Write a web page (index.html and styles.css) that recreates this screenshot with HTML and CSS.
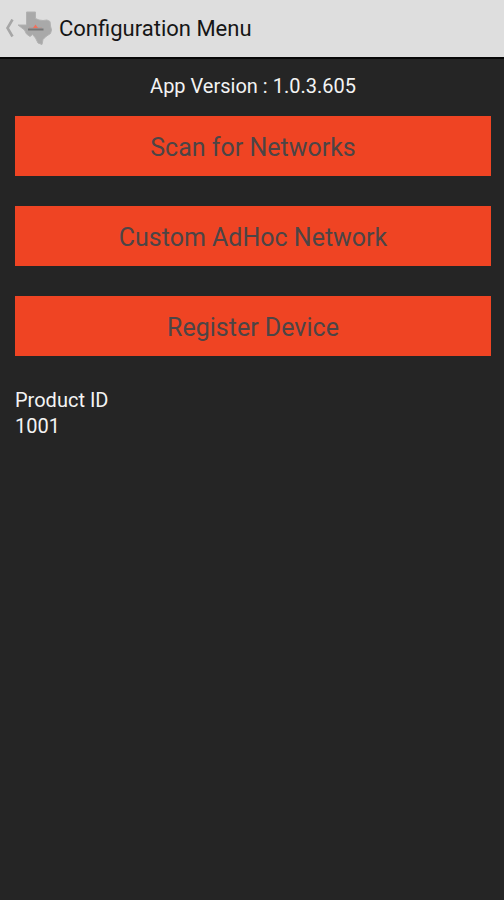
FILE: index.html
```html
<!DOCTYPE html>
<html lang="en">
<head>
  <meta charset="UTF-8" />
  <meta name="viewport" content="width=device-width, initial-scale=1" />
  <title>Configuration Menu</title>
  <link rel="stylesheet" href="styles.css">
</head>
<body>

<header>
  <a href="#" class="back" aria-label="Back">
    <svg class="chevron" width="10" height="20" viewBox="0 0 10 20">
      <path d="M8.500 0.500L3.500 9L8.500 17.500" fill="none" stroke="#a6a6a6" stroke-width="2.600" />
    </svg>
    <svg class="logo" width="36" height="36" viewBox="0 1 36 36">
      <path d="M9.500 2H18.500V8.500L22 10L26 10.500L30 10L33 11.500L33.500 16L34.500 20L33.500 23.500L29 26.500L26 29.500L25 34.500L21 33L18.500 28L15.500 24.500L13 26.500L9.500 24L7.500 20L1 15L9.500 15Z" fill="#a9a9a9" stroke="#b2b2b2" stroke-width="1" stroke-linejoin="round" />
      <path d="M12 17.800H25" stroke="#b59a96" stroke-width="1" />
      <path d="M16 18L18.500 14.500L21 18Z" fill="#f2705c" />
      <path d="M11 19.500H26.500" stroke="#777" stroke-width="2" />
    </svg>
  </a>
  <h1>Configuration Menu</h1>
</header>

<main>
  <p class="version">App Version : 1.0.3.605</p>

  <div class="menu">
    <button type="button">Scan for Networks</button>
    <button type="button">Custom AdHoc Network</button>
    <button type="button">Register Device</button>
  </div>

  <dl class="product">
    <dt>Product ID</dt>
    <dd>1001</dd>
  </dl>
</main>

</body>
</html>
```

FILE: styles.css
```css
* {
  box-sizing: border-box;
}
body {
  font-family: Roboto, sans-serif;
  font-size: 20px;
  line-height: 26px;
  margin: 0;
  min-height: 100vh;
  background: #252525;
  color: #f3f3f3;
}
header {
  display: flex;
  align-items: center;
  gap: 6px;
  height: 59px;
  padding: 0 4px;
  background: #dedede;
  border-bottom: 2px solid #080808;
}
.back {
  display: flex;
  align-items: center;
  gap: 3px;
}
h1 {
  margin: 0;
  font-size: 22px;
  font-weight: 400;
  color: #161616;
}
main {
  padding: 14px 13px 15px 15px;
}
.version {
  margin: 0 0 17px;
  text-align: center;
}
.menu {
  display: flex;
  flex-direction: column;
  gap: 30px;
}
.menu button {
  height: 60px;
  padding: 2px 0 0;
  border: none;
  background: #ef4423;
  color: #4c4546;
  font-family: inherit;
  font-size: 25px;
  cursor: pointer;
}
.menu button:hover {
  background: #d93b1d;
}
.product {
  margin: 31px 0 0;
}
.product dd {
  margin: 0;
}
```
